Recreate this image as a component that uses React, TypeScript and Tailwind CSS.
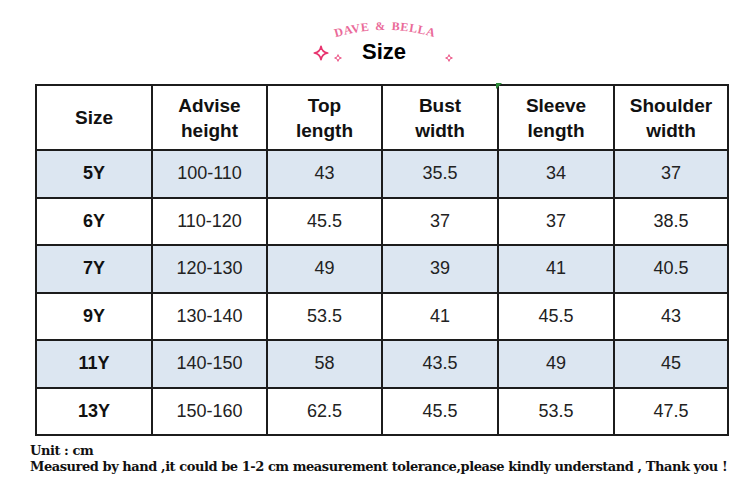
const headers = [
  ["Size"],
  ["Advise", "height"],
  ["Top", "length"],
  ["Bust", "width"],
  ["Sleeve", "length"],
  ["Shoulder", "width"],
]

const rows = [
  ["5Y", "100-110", "43", "35.5", "34", "37"],
  ["6Y", "110-120", "45.5", "37", "37", "38.5"],
  ["7Y", "120-130", "49", "39", "41", "40.5"],
  ["9Y", "130-140", "53.5", "41", "45.5", "43"],
  ["11Y", "140-150", "58", "43.5", "49", "45"],
  ["13Y", "150-160", "62.5", "45.5", "53.5", "47.5"],
]

const colWidths = ["w-[116px]", "w-[115px]", "w-[115px]", "w-[116px]", "w-[116px]", "w-[114px]"]

function Sparkle({ size }: { size: number }) {
  return (
    <svg width={size} height={size} viewBox="0 0 24 24" className="shrink-0">
      <path
        d="M12 2 C13 8 16 11 22 12 C16 13 13 16 12 22 C11 16 8 13 2 12 C8 11 11 8 12 2 Z"
        fill="none"
        stroke="#e8336e"
        strokeWidth={2.6}
        strokeLinejoin="round"
      />
    </svg>
  )
}

// brand mark: text bent along a shallow arch
function BrandArc() {
  return (
    <svg width="108" height="24" viewBox="0 0 108 24">
      <defs>
        <path id="arch" d="M2 22 Q54 6 106 22" />
      </defs>
      <text
        fill="#ea6a99"
        fontFamily="'Liberation Serif', serif"
        fontWeight="bold"
        fontSize="12"
        letterSpacing="0.6"
        wordSpacing="2"
      >
        <textPath href="#arch" startOffset="50%" textAnchor="middle">
          DAVE &amp; BELLA
        </textPath>
      </text>
    </svg>
  )
}

export default function App() {
  return (
    <div className="w-[750px] h-[487px] bg-white overflow-hidden font-['Liberation_Sans',Arial,sans-serif] text-[#111]">
      {/* brand + title */}
      <div className="h-[84px] flex flex-col">
        <div className="pl-[331px] pt-[16px]">
          <BrandArc />
        </div>
        <div className="flex items-center pl-[313px] -mt-[1px]">
          <div className="mt-[2px]">
            <Sparkle size={16} />
          </div>
          <div className="ml-[5px] mt-[12px]">
            <Sparkle size={8} />
          </div>
          <div className="ml-[20px] text-[22px] font-bold leading-[26px] text-black">Size</div>
          <div className="ml-[39px] mt-[12px]">
            <Sparkle size={8} />
          </div>
        </div>
      </div>

      {/* table */}
      <div className="relative ml-[35px] w-[692px]">
        <div className="absolute left-[461px] -top-[1px] w-0 h-0 border-t-[6px] border-r-[6px] border-t-[#2e8b3a] border-r-transparent" />
        <table className="w-[692px] border-collapse table-fixed">
          <thead>
            <tr className="h-[65px]">
              {headers.map((h, i) => (
                <th
                  key={i}
                  className={`${colWidths[i]} border-2 border-[#1c1c1c] bg-white text-[19px] font-bold leading-[25px] text-center align-middle`}
                >
                  {h.map((l) => (
                    <div key={l}>{l}</div>
                  ))}
                </th>
              ))}
            </tr>
          </thead>
          <tbody>
            {rows.map((r, ri) => (
              <tr key={ri} className={`h-[47.5px] ${ri % 2 === 0 ? "bg-[#dce6f1]" : "bg-white"}`}>
                {r.map((c, ci) => (
                  <td
                    key={ci}
                    className={`border-2 border-[#1c1c1c] text-center align-middle text-[18px] ${ci === 0 ? "font-bold" : "font-normal text-[#222]"}`}
                  >
                    {c}
                  </td>
                ))}
              </tr>
            ))}
          </tbody>
        </table>
      </div>

      {/* footer note */}
      <div className="ml-[30px] mt-[7px] font-['DejaVu_Serif',serif] font-bold text-[13px] leading-[16px] tracking-[-0.45px] text-[#111]">
        <div>Unit : cm</div>
        <div className="whitespace-nowrap">
          Measured by hand ,it could be 1-2 cm measurement tolerance,please kindly understand , Thank you !
        </div>
      </div>
    </div>
  )
}
